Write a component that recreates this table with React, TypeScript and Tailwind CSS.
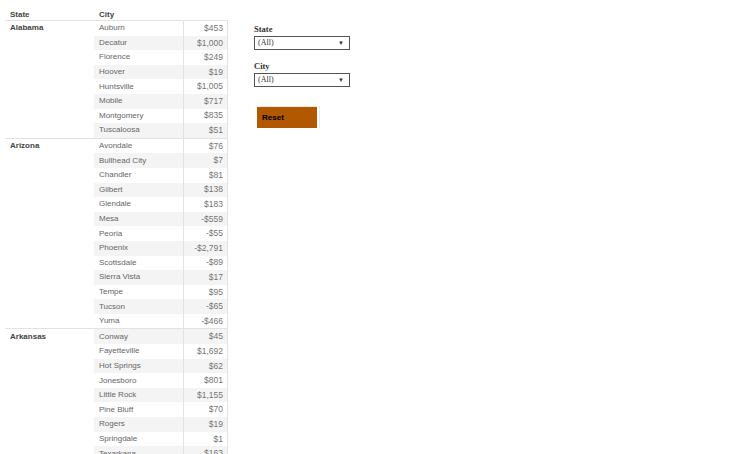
import React from 'react';

type City = { name: string; amount: string };
type StateGroup = { state: string; cities: City[] };

const data: StateGroup[] = [
  {
    state: 'Alabama',
    cities: [
      { name: 'Auburn', amount: '$453' },
      { name: 'Decatur', amount: '$1,000' },
      { name: 'Florence', amount: '$249' },
      { name: 'Hoover', amount: '$19' },
      { name: 'Huntsville', amount: '$1,005' },
      { name: 'Mobile', amount: '$717' },
      { name: 'Montgomery', amount: '$835' },
      { name: 'Tuscaloosa', amount: '$51' },
    ],
  },
  {
    state: 'Arizona',
    cities: [
      { name: 'Avondale', amount: '$76' },
      { name: 'Bullhead City', amount: '$7' },
      { name: 'Chandler', amount: '$81' },
      { name: 'Gilbert', amount: '$138' },
      { name: 'Glendale', amount: '$183' },
      { name: 'Mesa', amount: '-$559' },
      { name: 'Peoria', amount: '-$55' },
      { name: 'Phoenix', amount: '-$2,791' },
      { name: 'Scottsdale', amount: '-$89' },
      { name: 'Sierra Vista', amount: '$17' },
      { name: 'Tempe', amount: '$95' },
      { name: 'Tucson', amount: '-$65' },
      { name: 'Yuma', amount: '-$466' },
    ],
  },
  {
    state: 'Arkansas',
    cities: [
      { name: 'Conway', amount: '$45' },
      { name: 'Fayetteville', amount: '$1,692' },
      { name: 'Hot Springs', amount: '$62' },
      { name: 'Jonesboro', amount: '$801' },
      { name: 'Little Rock', amount: '$1,155' },
      { name: 'Pine Bluff', amount: '$70' },
      { name: 'Rogers', amount: '$19' },
      { name: 'Springdale', amount: '$1' },
      { name: 'Texarkana', amount: '$163' },
      { name: 'West Memphis', amount: '$28' },
    ],
  },
];

const Dropdown = () => (
  <div className="mt-[2px] flex h-[14px] w-[96px] items-center justify-between border border-[#555] bg-white pl-[3px] pr-[5px]">
    <span className="text-[8px] leading-none text-[#333]">(All)</span>
    <span className="text-[6px] leading-none text-[#333]">▼</span>
  </div>
);

export default function App() {
  let rowIndex = 0;
  return (
    <div className="flex h-[454px] w-[736px] overflow-hidden bg-white">
      <div className="ml-[5px] w-[223px] font-['Liberation_Sans',Arial,sans-serif]">
        <div className="flex h-[21px] items-end border-b border-[#e2e2e2] text-[8px] font-bold leading-[10px] text-[#444]">
          <div className="w-[89px] pl-[5px]">State</div>
          <div className="pl-[5px]">City</div>
        </div>
        {data.map((group, gi) => (
          <div key={group.state} className={gi > 0 ? 'flex border-t border-[#e2e2e2]' : 'flex'}>
            <div className="flex h-[14.6px] w-[89px] shrink-0 items-center pl-[5px] text-[8px] font-bold text-[#444]">
              {group.state}
            </div>
            <div className="flex flex-col">
              {group.cities.map((c) => {
                const striped = rowIndex++ % 2 === 1;
                return (
                  <div key={c.name} className={striped ? 'flex h-[14.6px] bg-[#f4f4f4]' : 'flex h-[14.6px]'}>
                    <div className="flex w-[90px] items-center border-r border-[#e2e2e2] pl-[5px] text-[8px] text-[#666]">
                      {c.name}
                    </div>
                    <div className="flex w-[44px] items-center justify-end border-r border-[#e2e2e2] pr-[4px] text-[8.5px] text-[#757575]">
                      {c.amount}
                    </div>
                  </div>
                );
              })}
            </div>
          </div>
        ))}
      </div>

      <div className="ml-[26px] flex flex-col pt-[24px] font-['Liberation_Serif','Times_New_Roman',serif]">
        <div className="text-[8.5px] font-bold leading-[10px] text-[#333]">State</div>
        <Dropdown />
        <div className="mt-[11px] text-[8.5px] font-bold leading-[10px] text-[#333]">City</div>
        <Dropdown />
        <div className="ml-[3px] mt-[19px] flex w-[63px] border-r border-t border-[#ececec]">
          <button className="flex h-[21px] w-[60px] items-center bg-[#b15800] pl-[5px] font-['Liberation_Sans',Arial,sans-serif] text-[8px] font-bold text-black">
            Reset
          </button>
        </div>
      </div>
    </div>
  );
}
